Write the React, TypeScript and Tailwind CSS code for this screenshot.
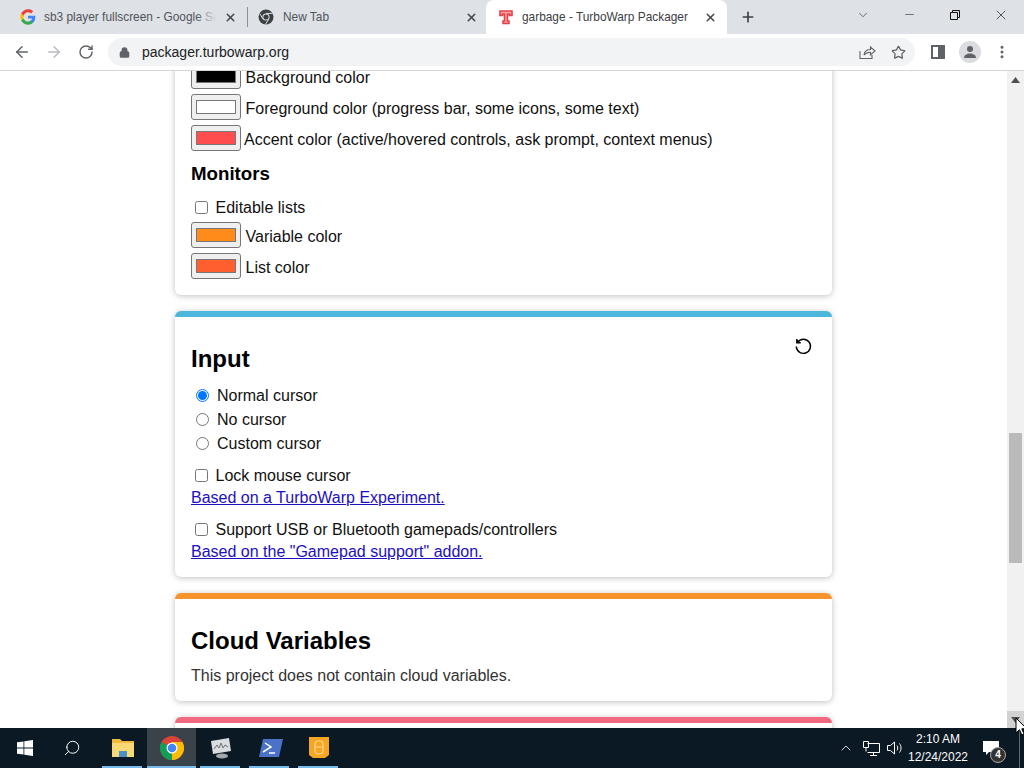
import { ArrowLeft, ArrowRight, EllipsisVertical, Lock, Minus, Plus, RotateCw, Star, X, ChevronDown, ChevronUp, Search } from 'lucide-react';

function Favicon({ kind }: { kind: 'google' | 'chrome' | 'turbo' }) {
    if (kind === 'google') {
        return (
            <svg width="16" height="16" viewBox="0 0 24 24" className="shrink-0">
                <path fill="#4285f4" d="M23 12.300c0-.9-.1-1.600-.2-2.300H12v4.400h6.200c-.3 1.400-1.100 2.600-2.300 3.400v2.800h3.700c2.200-2 3.400-5 3.400-8.300z" />
                <path fill="#34a853" d="M12 23.500c3.100 0 5.700-1 7.600-2.800l-3.700-2.900c-1 .7-2.300 1.100-3.900 1.100-3 0-5.500-2-6.400-4.700H1.800v2.900c1.900 3.800 5.800 6.400 10.200 6.400z" />
                <path fill="#fbbc05" d="M5.600 14.200c-.5-1.400-.5-3 0-4.400V6.900H1.800c-1.600 3.200-1.600 7 0 10.200l3.800-2.900z" />
                <path fill="#ea4335" d="M12 5c1.700 0 3.200.6 4.400 1.700l3.300-3.300C17.700 1.500 15.100.5 12 .5 7.600.5 3.700 3.100 1.800 6.900l3.800 2.900C6.500 7 9 5 12 5z" />
            </svg>
        );
    }
    if (kind === 'chrome') {
        return (
            <svg width="16" height="16" viewBox="0 0 16 16" className="shrink-0">
                <circle cx="8" cy="8" r="7.500" fill="#3c4043" />
                <circle cx="8" cy="8" r="3.600" fill="#dee1e6" />
                <circle cx="8" cy="8" r="2.600" fill="#3c4043" />
                <path d="M8 4.400h6.500M5 10l-3.300-5.500M10.800 10l-3.400 5.500" stroke="#dee1e6" strokeWidth="1" />
            </svg>
        );
    }
    return (
        <svg width="16" height="16" viewBox="0 0 16 16" className="shrink-0">
            <path d="M2 2h12v4.500h-2.500V5H9.500v7H11v2.500H5V12h1.500V5h-2v1.500H2z" fill="#f7a6a8" stroke="#e8404a" strokeWidth="1.600" />
        </svg>
    );
}

function Tab({ title, icon, active, className, fade }: { title: string; icon: 'google' | 'chrome' | 'turbo'; active?: boolean; className: string; fade?: boolean }) {
    return (
        <div className={`flex h-full items-center ${className} ${active ? 'rounded-t-lg bg-white' : ''}`}>
            <Favicon kind={icon} />
            <span className={`relative flex-1 overflow-hidden whitespace-nowrap pt-[2px] text-[11.880px] ${active ? 'text-[#3c4043]' : 'text-[#50545a]'}`}>
                {title}
                {fade && <span className="absolute bottom-0 right-0 top-0 w-[20px] bg-gradient-to-r from-transparent to-[#dee1e6]" />}
            </span>
            <X size={13} strokeWidth={2.800} className="shrink-0 text-[#45494e]" />
        </div>
    );
}

function Swatch({ color }: { color: string }) {
    return (
        <span className="mt-[-3px] flex h-[26px] w-[50px] shrink-0 rounded-[3px] border border-[#767676] bg-[#efefef] px-[4px] py-[5px]">
            <span className="h-full w-full border border-[#777]" style={{ backgroundColor: color }} />
        </span>
    );
}

function ColorRow({ color, label, gap = 'gap-[4.500px]' }: { color: string; label: string; gap?: string }) {
    return (
        <div className={`flex h-[31px] items-center ${gap}`}>
            <Swatch color={color} />
            <span>{label}</span>
        </div>
    );
}

function Check({ label }: { label: string }) {
    return (
        <div className="flex h-[22px] items-center gap-[7.500px] pl-[4px]">
            <span className="mt-[-2px] h-[13px] w-[13px] rounded-[2.500px] border border-[#767676] bg-white" />
            <span>{label}</span>
        </div>
    );
}

function Radio({ label, checked }: { label: string; checked?: boolean }) {
    return (
        <div className="flex h-[24px] items-center gap-[8px] pl-[5px]">
            {checked ? (
                <span className="mt-[-2px] flex h-[13px] w-[13px] items-center justify-center rounded-full border border-[#0075ff] bg-white">
                    <span className="h-[9px] w-[9px] rounded-full bg-[#0075ff]" />
                </span>
            ) : (
                <span className="mt-[-2px] h-[13px] w-[13px] rounded-full border border-[#767676] bg-white" />
            )}
            <span>{label}</span>
        </div>
    );
}

function Card({ bar, children, extra = '' }: { bar: string; children?: React.ReactNode; extra?: string }) {
    return (
        <section className={`relative w-[657px] rounded-[6px] border-t-[6px] bg-white px-4 shadow-[0_1px_6px_rgba(0,0,0,0.25)] ${bar} ${extra}`}>
            {children}
        </section>
    );
}

function TaskIcon({ children, active }: { children: React.ReactNode; active?: boolean }) {
    return (
        <div className={`relative flex h-full w-[49px] items-center justify-center ${active ? 'bg-[#3a4349]' : ''}`}>
            {children}
            <span className={`absolute bottom-0 h-[2px] bg-[#76b9ed] ${active ? 'left-0 right-0' : 'left-[4px] right-[5px]'}`} />
        </div>
    );
}

export default function App() {
    return (
        <div className="flex h-[768px] w-[1024px] flex-col overflow-hidden bg-white font-['Liberation_Sans',Arial,sans-serif] text-black">
            {/* Tab strip */}
            <div className="flex h-[34px] shrink-0 items-stretch bg-[#dee1e6]">
                <Tab title="sb3 player fullscreen - Google Search" icon="google" fade className="w-[247px] gap-[8px] pl-[20px] pr-[10px]" />
                <div className="my-[7px] w-px bg-[#8d9094]" />
                <Tab title="New Tab" icon="chrome" className="w-[238px] gap-[9px] pl-[10px] pr-[8px]" />
                <Tab title="garbage - TurboWarp Packager" icon="turbo" active className="w-[241px] gap-[8px] pl-[12px] pr-[10px]" />
                <div className="flex w-[41px] items-center justify-center">
                    <Plus size={16} strokeWidth={2.500} className="text-[#3c4043]" />
                </div>
                <div className="ml-auto flex items-start">
                    <div className="flex h-[29px] w-[46px] items-center justify-center"><ChevronDown size={14} strokeWidth={1.200} className="text-[#333]" /></div>
                    <div className="flex h-[29px] w-[46px] items-center justify-center"><Minus size={13} strokeWidth={1} className="text-[#111]" /></div>
                    <div className="flex h-[29px] w-[46px] items-center justify-center">
                        <svg width="10" height="10" viewBox="0 0 10 10" fill="none" stroke="#111"><path d="M.5 2.500h7v7h-7zM2.500 2.500v-2h7v7h-2" /></svg>
                    </div>
                    <div className="flex h-[29px] w-[46px] items-center justify-center"><X size={16} strokeWidth={1} className="text-[#111]" /></div>
                </div>
            </div>

            {/* Toolbar */}
            <div className="flex h-[37px] shrink-0 items-center border-b border-[#d5d5d5] bg-white pl-[13px]">
                <ArrowLeft size={18} strokeWidth={2} className="text-[#5f6368]" />
                <ArrowRight size={18} strokeWidth={2} className="ml-[14px] text-[#b9bcc0]" />
                <RotateCw size={16} strokeWidth={2.200} className="ml-[15px] text-[#5f6368]" />
                <div className="ml-[14px] flex h-[28px] w-[807px] items-center rounded-full bg-[#f1f3f4] pl-[11px] pr-[9px]">
                    <Lock size={11} strokeWidth={3} className="text-[#5f6368]" fill="#5f6368" />
                    <span className="ml-[12px] text-[14px] text-[#202124]">packager.turbowarp.org</span>
                    <svg width="18" height="16" viewBox="0 0 18 16" fill="none" stroke="#5f6368" strokeWidth="1.100" className="ml-auto mr-[15px]">
                        <path d="M2 7v7.500h12V11M6 11c.5-3.500 3-5.500 6.500-5.500V3L17 7l-4.500 3.800V8.200C9.800 8.200 7.500 9 6 11z" />
                    </svg>
                    <Star size={15} strokeWidth={2} className="text-[#5f6368]" />
                </div>
                <div className="ml-[16px] flex h-[14px] w-[14px] border-2 border-[#5f6368]">
                    <span className="ml-auto h-full w-[5px] bg-[#5f6368]" />
                </div>
                <div className="ml-[14px] flex h-[22px] w-[22px] items-center justify-center rounded-full bg-[#dadce0]">
                    <svg width="14" height="14" viewBox="0 0 14 14" fill="#5f6368">
                        <circle cx="7" cy="4" r="3" />
                        <path d="M1 13c0-3 3-4.500 6-4.500s6 1.500 6 4.500z" />
                    </svg>
                </div>
                <EllipsisVertical size={16} strokeWidth={2.500} className="ml-[13px] text-[#5f6368]" />
            </div>

            {/* Page */}
            <div className="flex min-h-0 flex-1">
                <div className="min-w-0 flex-1 overflow-hidden bg-white text-[16px] leading-[22px] text-[#111]">
                    <div className="ml-[175px] mt-[-15px] flex flex-col gap-[16px]">
                        <Card bar="border-t-transparent" extra="rounded-t-none pb-[12px]">
                            <ColorRow color="#000000" label="Background color" />
                            <ColorRow color="#ffffff" label="Foreground color (progress bar, some icons, some text)" />
                            <ColorRow color="#ff4c4c" label="Accent color (active/hovered controls, ask prompt, context menus)" gap="gap-[3px]" />
                            <h3 className="mt-[8px] text-[18.700px] font-bold leading-[22px] text-black">Monitors</h3>
                            <div className="mt-[12px]"><Check label="Editable lists" /></div>
                            <div className="mt-[2px]">
                                <ColorRow color="#ff8c1a" label="Variable color" />
                                <ColorRow color="#ff5f2e" label="List color" />
                            </div>
                        </Card>

                        <Card bar="border-t-[#4db6dc]" extra="pb-[14px]">
                            <div className="absolute right-[19px] top-[19px]">
                                <svg width="20" height="20" viewBox="0 0 24 24" fill="none" stroke="#000" strokeWidth="1.700">
                                    <path d="M5.500 7.500a8.500 8.500 0 1 1-1.500 5" />
                                    <path d="M4.500 3.500v4.800h4.800" fill="#000" strokeWidth="1.500" />
                                </svg>
                            </div>
                            <h2 className="mt-[28px] text-[24px] font-bold leading-[28px] text-black">Input</h2>
                            <div className="mt-[11px]">
                                <Radio label="Normal cursor" checked />
                                <Radio label="No cursor" />
                                <Radio label="Custom cursor" />
                            </div>
                            <div className="mt-[9px]"><Check label="Lock mouse cursor" /></div>
                            <a className="block text-[#1c10c0] underline">Based on a TurboWarp Experiment.</a>
                            <div className="mt-[10px]"><Check label="Support USB or Bluetooth gamepads/controllers" /></div>
                            <a className="block text-[#1c10c0] underline">Based on the "Gamepad support" addon.</a>
                        </Card>

                        <Card bar="border-t-[#f7932b]" extra="pb-[14px]">
                            <h2 className="mt-[28px] text-[24px] font-bold leading-[28px] text-black">Cloud Variables</h2>
                            <p className="mt-[10px] text-[#333]">This project does not contain cloud variables.</p>
                        </Card>

                        <Card bar="border-t-[#f0697f]" extra="h-[40px]" />
                    </div>
                </div>
                {/* Scrollbar */}
                <div className="relative flex w-[17px] shrink-0 flex-col bg-[#f1f1f1]">
                    <div className="flex h-[17px] items-center justify-center">
                        <svg width="9" height="6" viewBox="0 0 9 6" fill="#505050"><path d="M4.500 0 9 6H0z" /></svg>
                    </div>
                    <div className="ml-[2px] mt-[345px] h-[130px] w-[13px] bg-[#bababa]" />
                    <div className="mt-auto flex h-[17px] items-center justify-center bg-[#d2d2d2]">
                        <svg width="9" height="6" viewBox="0 0 9 6" fill="#505050"><path d="M0 0h9L4.500 6z" /></svg>
                    </div>
                    <svg width="13" height="20" viewBox="0 0 13 20" className="absolute bottom-[-9px] left-[8px] z-10">
                        <path d="M1 1v15l3.500-3.300 2.300 5.300 2.300-1-2.300-5.200h5z" fill="#fff" stroke="#000" strokeWidth="1" />
                    </svg>
                </div>
            </div>

            {/* Taskbar */}
            <div className="flex h-[40px] shrink-0 items-center bg-[#0b1924] text-white">
                <div className="flex h-full w-[49px] items-center justify-center">
                    <svg width="16" height="16" viewBox="0 0 16 16" fill="#fff"><path d="M0 2.300 6.500 1.400v6.200H0zM7.300 1.300 16 0v7.600H7.300zM0 8.400h6.500v6.200L0 13.700zM7.300 8.400H16V16l-8.700-1.300z" /></svg>
                </div>
                <div className="flex h-full w-[49px] items-center justify-center pr-[3px]">
                    <Search size={18} strokeWidth={1.300} className="-scale-x-100 text-white" />
                </div>
                <TaskIcon>
                    <svg width="22" height="20" viewBox="0 0 22 20">
                        <path d="M0 1h8l2 2h12v16H0z" fill="#f0b93a" />
                        <path d="M0 5h22v14H0z" fill="#f9d975" />
                        <path d="M7 13h8v6H7z" fill="#4a90c8" />
                    </svg>
                </TaskIcon>
                <TaskIcon active>
                    <svg width="24" height="24" viewBox="0 0 24 24">
                        <circle cx="12" cy="12" r="12" fill="#db4437" />
                        <path d="M12 12 1.600 18A12 12 0 0 0 12 24z" fill="#0f9d58" />
                        <path d="M1.600 6A12 12 0 0 0 1.600 18L12 12z" fill="#0f9d58" />
                        <path d="M12 12V24A12 12 0 0 0 22.400 6H12z" fill="#fbbc05" />
                        <circle cx="12" cy="12" r="5.500" fill="#fff" />
                        <circle cx="12" cy="12" r="4.300" fill="#4285f4" />
                    </svg>
                </TaskIcon>
                <TaskIcon>
                    <svg width="24" height="24" viewBox="0 0 24 24">
                        <path d="M2 5 20 2l2 13-18 3z" fill="#d9dde0" />
                        <path d="M5 13l3-4 2 3 2-5 2 5 2-3 3 2" fill="none" stroke="#6d7378" strokeWidth="1" />
                        <ellipse cx="13" cy="20" rx="6" ry="2.500" fill="#a4a8ab" />
                    </svg>
                </TaskIcon>
                <TaskIcon>
                    <svg width="26" height="24" viewBox="0 0 26 24">
                        <path d="M6 3h20l-4 18H2z" fill="#4a72c8" />
                        <path d="M8 7l6 4-8 5M12 17h6" fill="none" stroke="#fff" strokeWidth="1.500" />
                    </svg>
                </TaskIcon>
                <TaskIcon>
                    <svg width="22" height="24" viewBox="0 0 22 24">
                        <path d="M1 1h20v18l-4 3H5l-4-3z" fill="#f5a623" />
                        <rect x="7" y="5" width="8" height="13" rx="3" fill="none" stroke="#fcd58a" strokeWidth="1.200" />
                        <path d="M7 11h8" stroke="#fcd58a" strokeWidth="1.200" />
                    </svg>
                </TaskIcon>

                <div className="ml-auto flex h-full items-center">
                    <ChevronUp size={16} strokeWidth={1.200} className="text-white" />
                    <svg width="17" height="15" viewBox="0 0 17 15" fill="none" stroke="#fff" className="ml-[9px]">
                        <path d="M4.500 2.500h12v9h-12M10.500 11.500v3M7 14.500h7M.5.500h5v6h-5zM3 6.500v4" />
                    </svg>
                    <svg width="16" height="14" viewBox="0 0 16 14" fill="none" stroke="#fff" className="ml-[7px]">
                        <path d="M.5 4.500h3l4-3.500v12l-4-3.500h-3zM10 4.500c1 1.500 1 3.500 0 5M12.500 2.500c2 2.500 2 6.500 0 9" />
                    </svg>
                    <div className="ml-[-2px] flex w-[74px] flex-col items-center text-[12px] leading-[18px]">
                        <span>2:10 AM</span>
                        <span>12/24/2022</span>
                    </div>
                    <div className="relative flex h-full w-[44px] items-center pl-[8px]">
                        <svg width="16" height="15" viewBox="0 0 16 15" fill="#fff"><path d="M0 0h16v11H6l-3 3v-3H0z" /></svg>
                        <span className="absolute bottom-[5px] right-[13px] flex h-[16px] w-[16px] items-center justify-center rounded-full border border-[#aaa] bg-[#333] text-[10px] font-bold leading-none">4</span>
                    </div>
                    <div className="h-full w-[5px] border-l border-[#666]" />
                </div>
            </div>
        </div>
    );
}
